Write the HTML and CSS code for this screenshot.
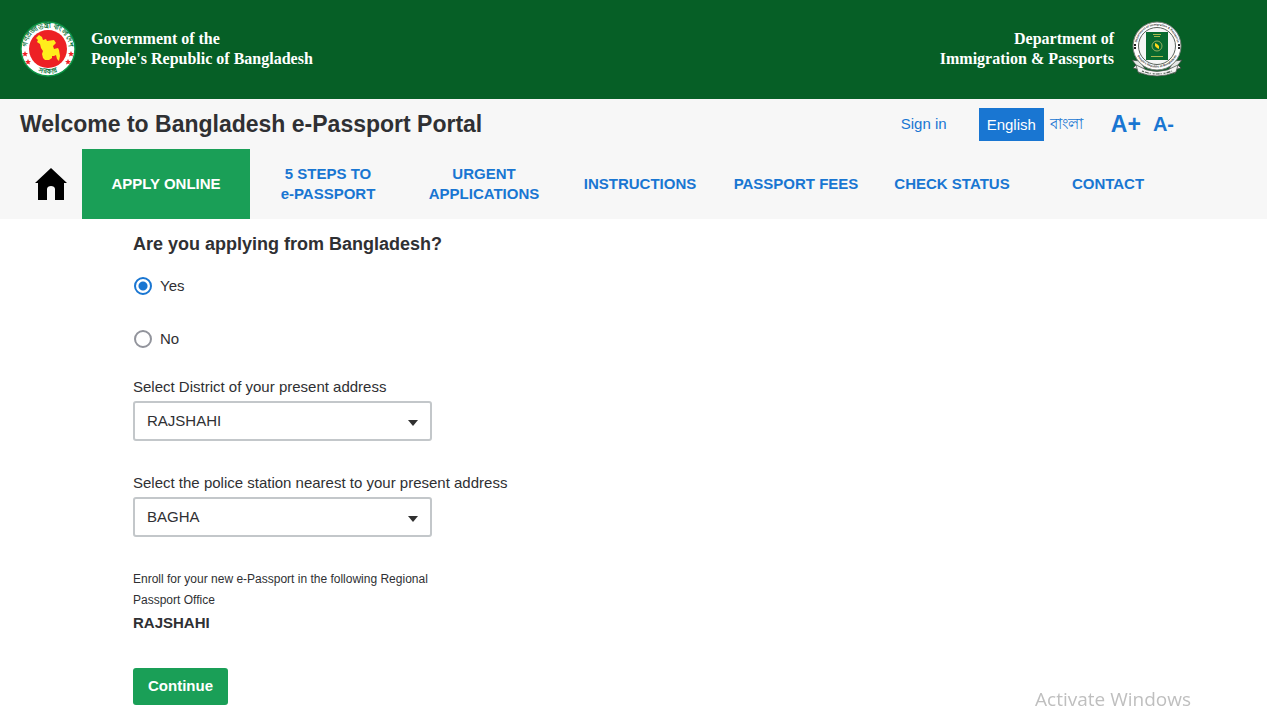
FILE: index.html
```
<!DOCTYPE html>
<html lang="en">
<head>
  <meta charset="UTF-8">
  <meta name="viewport" content="width=device-width, initial-scale=1.0">
  <title>Bangladesh e-Passport Portal</title>
  <link rel="stylesheet" href="styles.css">
</head>
<body>
  <header class="site-header">
    <div class="brand">
      <svg class="brand-logo" viewBox="0 0 56 56" aria-hidden="true">
        <defs>
          <path id="sealTop" d="M8 34 A21 21 0 1 1 48 34" />
          <path id="sealBottom" d="M12 47 A25 25 0 0 0 44 47" />
        </defs>
        <circle cx="28" cy="28" r="27" fill="#fff" stroke="#0b9444" stroke-width="1.4" />
        <circle cx="28" cy="28" r="19" fill="#ed2024" />
        <text class="seal-text"><textPath href="#sealTop" startOffset="50%" text-anchor="middle">গণপ্রজাতন্ত্রী বাংলাদেশ</textPath></text>
        <text class="seal-text"><textPath href="#sealBottom" startOffset="50%" text-anchor="middle">সরকার</textPath></text>
        <path fill="#ffee1c" d="M19 14l3 2 1 3 3-1 1 2 7-1 2 3-3 3 1 3 4-1 1 2 1 6-1 5-2-2-1-4-2 1-2 0 0 2-3 2-4 0-2-2-1-4 1-3-2-3-1-4-3-2 1-2-2-2z" />
        <g fill="#ed2024">
          <path id="star" d="M5 30l.9 2 2.100.1-1.700 1.400.7 2.100L5 34.400l-2 1.200.7-2.100L2 32.100l2.100-.1z" />
          <use href="#star" x="3" y="8" />
          <use href="#star" x="46" />
          <use href="#star" x="43" y="8" />
        </g>
      </svg>
      <div class="brand-name">Government of the<br>People's Republic of Bangladesh</div>
    </div>
    <div class="brand brand-right">
      <div class="brand-name">Department of<br>Immigration &amp; Passports</div>
      <svg class="brand-logo department-logo" viewBox="0 0 52 56" aria-hidden="true">
        <defs>
          <path id="deptTop" d="M5.500 25 A20.500 20.500 0 0 1 46.500 25" />
          <path id="deptBottom" d="M5 32 A22.500 22.500 0 0 0 47 32" />
        </defs>
        <path d="M1 39l8 1 5 8-6 5 1-4-7-2 3-3zM51 39l-8 1-5 8 6 5-1-4 7-2-3-3z" fill="#e5e8e6" stroke="#3b4840" stroke-width=".8" />
        <circle cx="26" cy="25" r="24" fill="#fff" stroke="#777f79" />
        <circle cx="26" cy="25" r="18.500" fill="#f6f6f6" stroke="#59635c" />
        <text class="department-text"><textPath href="#deptTop" startOffset="50%" text-anchor="middle">Department of Immigration &amp; Passports</textPath></text>
        <text class="department-text"><textPath href="#deptBottom" startOffset="50%" text-anchor="middle">People's Republic of Bangladesh</textPath></text>
        <path d="M3 23h2v2H3zM3 26h2v2H3zM47 23h2v2h-2zM47 26h2v2h-2z" fill="#222" />
        <rect x="15" y="11" width="22" height="28" fill="#08692f" />
        <path d="M22 13.500h8M23 15.500h6M20 35.500h12" stroke="#a9b64f" />
        <circle cx="26" cy="25" r="5" fill="none" stroke="#a2b663" stroke-width=".9" />
        <path d="M24 22l2 1 2 2v3l-2-1-2-2z" fill="#ffd719" />
        <path d="M5 44q21 13 42 0l-2 7q-19 8-38 0z" fill="#f5f5f5" stroke="#505a53" stroke-width=".8" />
        <path d="M11 50q15 6 30 0" fill="none" stroke="#566058" stroke-width="1.200" stroke-dasharray="2 1 4 1 1 2" />
      </svg>
    </div>
  </header>

  <div class="portal-bar">
    <div class="title-row">
      <h1 class="portal-title">Welcome to Bangladesh e-Passport Portal</h1>
      <div class="tools">
        <a href="#" class="sign-in">Sign in</a>
        <div class="languages">
          <a href="#" class="language active">English</a>
          <a href="#" class="language bangla" lang="bn">বাংলা</a>
        </div>
        <div class="text-size">
          <button type="button" class="size-button larger">A+</button>
          <button type="button" class="size-button">A-</button>
        </div>
      </div>
    </div>
    <nav class="main-nav">
      <a href="#" class="nav-link home" aria-label="Home">
        <svg class="home-icon" viewBox="0 0 32 32" aria-hidden="true">
          <path d="M16 0L0 15h3v17h9V21c0-4 8-4 8 0v11h9V15h3z" />
        </svg>
      </a>
      <a href="#" class="nav-link current">APPLY ONLINE</a>
      <a href="#" class="nav-link">5 STEPS TO<br>e-PASSPORT</a>
      <a href="#" class="nav-link">URGENT<br>APPLICATIONS</a>
      <a href="#" class="nav-link">INSTRUCTIONS</a>
      <a href="#" class="nav-link">PASSPORT FEES</a>
      <a href="#" class="nav-link">CHECK STATUS</a>
      <a href="#" class="nav-link">CONTACT</a>
    </nav>
  </div>

  <main class="container">
    <form id="applicationForm">
      <fieldset class="radio-options">
        <legend class="heading">Are you applying from Bangladesh?</legend>
        <label class="radio-label"><input type="radio" name="fromBangladesh" value="yes" checked /> Yes</label>
        <label class="radio-label"><input type="radio" name="fromBangladesh" value="no" /> No</label>
      </fieldset>

      <div class="form-group">
        <label for="district" class="form-label">Select District of your present address</label>
        <select id="district" class="form-select" name="district">
          <option value="RAJSHAHI">RAJSHAHI</option>
        </select>
      </div>

      <div class="form-group">
        <label for="policeStation" class="form-label">Select the police station nearest to your present address</label>
        <select id="policeStation" class="form-select" name="policeStation">
          <option value="BAGHA">BAGHA</option>
        </select>
      </div>

      <div class="office">
        <p class="office-note">Enroll for your new e-Passport in the following Regional Passport Office</p>
        <strong class="office-name">RAJSHAHI</strong>
      </div>

      <button type="submit" class="continue-button">Continue</button>
    </form>
  </main>

  <div class="activation-note">Activate Windows</div>
</body>
</html>
```
FILE: styles.css
```
* {
  box-sizing: border-box;
}

body {
  margin: 0;
  background: #fff;
  color: #2f3033;
  font-family: Arial, "Liberation Sans", sans-serif;
  font-size: 15px;
  line-height: 20px;
}

a {
  color: #1976d2;
  text-decoration: none;
}

.site-header {
  display: flex;
  justify-content: space-between;
  align-items: center;
  min-height: 99px;
  padding: 0 84px 2px 20px;
  background: #065f26;
  color: #fff;
}

.brand {
  display: flex;
  align-items: center;
  gap: 15px;
}

.brand-right {
  gap: 17px;
  text-align: right;
}

.brand-logo {
  width: 56px;
  height: 56px;
}

.department-logo {
  width: 52px;
}

.brand-name {
  font-family: "Liberation Serif", serif;
  font-size: 16px;
  font-weight: bold;
}

.seal-text {
  fill: #08743a;
  font-size: 7px;
  font-weight: bold;
}

.department-text {
  fill: #333;
  font-size: 3px;
  font-weight: bold;
}

.portal-bar {
  padding: 0 81px 0 20px;
  background: #f7f7f7;
}

.title-row {
  display: flex;
  justify-content: space-between;
  align-items: center;
  height: 50px;
}

.portal-title {
  margin: 0;
  font-size: 23px;
  line-height: 28px;
}

.tools {
  display: flex;
  align-items: center;
  padding-right: 12px;
}

.sign-in {
  margin-right: 32px;
}

.languages {
  display: flex;
  align-items: center;
  gap: 6px;
  margin-right: 28px;
}

.language.active {
  padding: 7px 8px 6px;
  background: #1976d2;
  color: #fff;
}

.text-size {
  display: flex;
  align-items: center;
  gap: 12px;
}

.size-button {
  padding: 0;
  border: 0;
  background: none;
  color: #1976d2;
  font-family: inherit;
  font-size: 20px;
  font-weight: bold;
  cursor: pointer;
}

.size-button.larger {
  font-size: 23px;
}

.main-nav {
  display: grid;
  grid-template-columns: 62px 168px repeat(6, 1fr);
  min-height: 70px;
}

.nav-link {
  display: flex;
  justify-content: center;
  align-items: center;
  font-weight: bold;
  text-align: center;
}

.nav-link.current {
  background: #1a9f57;
  color: #fff;
}

.home-icon {
  width: 32px;
  height: 32px;
  fill: #000;
}

.container {
  padding: 14px 20px 7px 133px;
}

.radio-options {
  margin: 0;
  padding: 0;
  border: 0;
}

.heading {
  margin-bottom: 21px;
  padding: 0;
  font-size: 18px;
  font-weight: bold;
  line-height: 22px;
}

.radio-label {
  display: flex;
  align-items: center;
  gap: 8px;
  width: fit-content;
  margin-bottom: 33px;
}

.radio-label:last-child {
  margin-bottom: 28px;
}

.radio-label input {
  appearance: none;
  width: 18px;
  height: 18px;
  margin: 0 0 0 1px;
  border: 2px solid #92949c;
  border-radius: 50%;
  background: #fff;
}

.radio-label input:checked {
  border-color: #1976d2;
  background: radial-gradient(circle, #1976d2 4px, #fff 5px);
}

.form-group {
  margin-bottom: 32px;
}

.form-label {
  display: block;
  margin-bottom: 4px;
}

.form-select {
  appearance: none;
  display: block;
  width: 100%;
  max-width: 299px;
  height: 40px;
  padding: 0 36px 2px 12px;
  border: 2px solid #c3c7ca;
  border-radius: 3px;
  background: #fff url("data:image/svg+xml,%3Csvg xmlns='http://www.w3.org/2000/svg' width='10' height='6'%3E%3Cpath d='M0 0h10L5 6z' fill='%23303030'/%3E%3C/svg%3E") no-repeat right 12px top 17px;
  color: inherit;
  font-family: inherit;
  font-size: 15px;
}

.office {
  max-width: 299px;
  margin-bottom: 35px;
}

.office-note {
  margin: 0 0 2px;
  font-size: 12px;
  line-height: 21px;
}

.office-name {
  display: block;
}

.continue-button {
  display: block;
  min-width: 95px;
  height: 37px;
  padding: 0 14px 2px;
  border: 0;
  border-radius: 3px;
  background: #1a9f57;
  color: #fff;
  font-family: inherit;
  font-size: 15px;
  font-weight: bold;
}

/* system notice over the page corner */
.activation-note {
  position: fixed;
  right: 76px;
  bottom: 0;
  color: #bfbfbf;
  font-family: "Segoe UI", "Open Sans", sans-serif;
  font-size: 19px;
  line-height: 26px;
}
```
